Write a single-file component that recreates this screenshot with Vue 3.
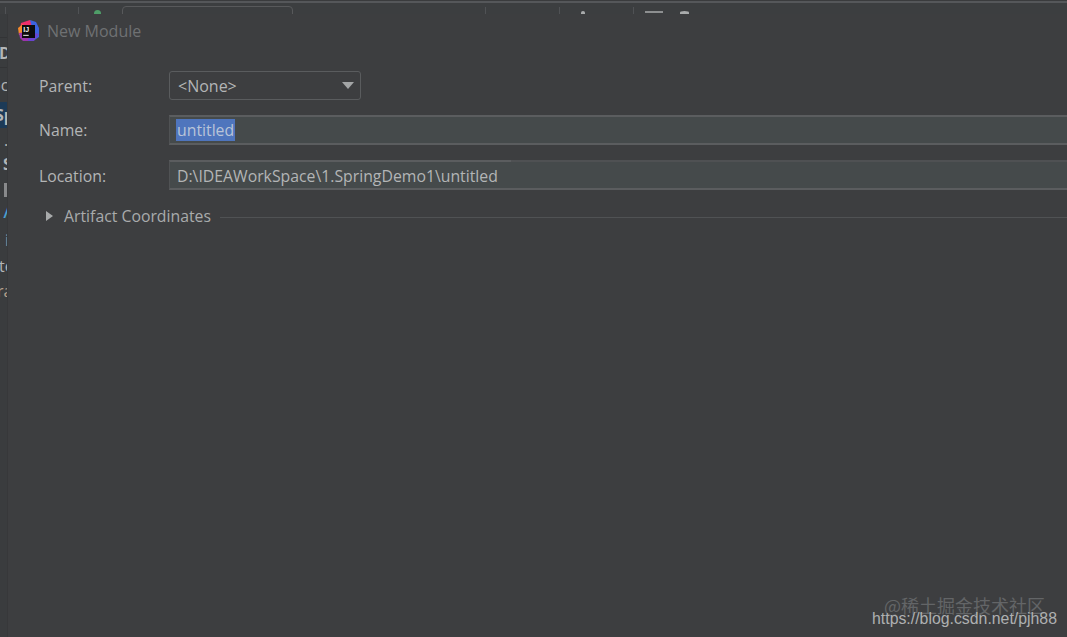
<script setup>
const sideRows = [
  { text: 'D', cls: 'bold first', h: 31, off: -1 },
  { text: 'oc', cls: '', h: 34, off: -9 },
  { text: 'Sp', cls: 'bold sel', h: 26, off: -5 },
  { text: '.', cls: 'dot', h: 24, off: 4 },
  { text: 'S', cls: 'bold', h: 24, off: 3 },
  { text: '', cls: 'block', h: 24, off: 4 },
  { text: '/', cls: 'blue', h: 26, off: 4 },
  { text: 'i', cls: 'thin', h: 28, off: 5 },
  { text: 'te', cls: '', h: 24, off: -1 },
  { text: 'ra', cls: 'orange', h: 26, off: -3 }
]
</script>

<template>
  <div class="screen">
    <div class="ide-top">
      <span class="tick t0"></span>
      <span class="tick t00"></span>
      <span class="green-dot"></span>
      <span class="run-box"></span>
      <span class="tick t1"></span>
      <span class="tick t2"></span>
      <span class="tick t3"></span>
      <span class="frag f1"></span>
      <span class="frag f2"></span>
      <span class="frag f3"></span>
    </div>
    <div class="body">
      <aside class="side">
        <div
          v-for="(r, i) in sideRows"
          :key="i"
          class="side-row"
          :class="r.cls"
          :style="{ height: r.h + 'px', paddingLeft: Math.max(r.off, 0) + 'px', textIndent: Math.min(r.off, 0) + 'px' }"
        >{{ r.text }}</div>
      </aside>
      <main class="dialog">
        <header class="title">
          <svg class="logo" width="22" height="22" viewBox="0 0 22 22">
            <path d="M3 3 L12 0 L16 5 L9 13 L2 9 Z" fill="#ee2e6b" />
            <path d="M0 8 L5 4 L8 14 L1 15 Z" fill="#f68a2a" />
            <path d="M12 0 L18 2 L21 8 L21 17 L15 21 L9 19 L14 8 Z" fill="#3c63e0" />
            <path d="M1 13 L9 12 L12 21 L5 21 L2 18 Z" fill="#9b35ad" />
            <path d="M12 12 L21 14 L16 21 L10 21 Z" fill="#6a44cf" />
            <rect x="4" y="5" width="13" height="13" fill="#0c0c0e" />
            <text x="5.2" y="11.8" class="ij">IJ</text>
            <rect x="5.2" y="14.8" width="5.5" height="1.2" fill="#c8c8c8" />
          </svg>
          <span class="title-text">New Module</span>
        </header>
        <div class="form">
          <div class="row parent-row">
            <label>Parent:</label>
            <div class="combo">
              <span>&lt;None&gt;</span>
              <span class="caret"></span>
            </div>
          </div>
          <div class="row name-row">
            <label>Name:</label>
            <div class="field name-field"><span class="selected">untitled</span></div>
          </div>
          <div class="row loc-row">
            <label>Location:</label>
            <div class="field loc-field"><span class="path">D:\IDEAWorkSpace\1.SpringDemo1\untitled</span></div>
          </div>
          <div class="artifact">
            <span class="tri"></span>
            <span class="art-text">Artifact Coordinates</span>
            <span class="art-line"></span>
          </div>
        </div>
      </main>
    </div>
    <div class="marks">
      <div class="mark-cn">@稀土掘金技术社区</div>
      <div class="mark-url">https://blog.csdn.net/pjh88</div>
    </div>
  </div>
</template>

<style>
html, body { margin: 0; background: #3c3d3f; }
</style>

<style scoped>
.screen {
  position: relative;
  width: 1067px;
  height: 637px;
  overflow: hidden;
  background: #3d3e40;
  font-family: "Open Sans", "Noto Sans", sans-serif;
  color: #b3b5b6;
  display: flex;
  flex-direction: column;
}
.ide-top {
  position: relative;
  height: 14px;
  flex: none;
  overflow: hidden;
  background: #3c3e40;
  box-sizing: border-box;
  border-top: 1px solid #3a3b3d;
}
.ide-top::before {
  content: "";
  display: block;
  height: 2px;
  background: #55575a;
}
.green-dot {
  position: absolute;
  left: 94px;
  top: 9px;
  width: 7px;
  height: 7px;
  border-radius: 50%;
  background: #4f9e68;
}
.run-box {
  position: absolute;
  left: 122px;
  top: 5px;
  width: 171px;
  height: 30px;
  border: 1px solid #58595b;
  border-radius: 4px;
  box-sizing: border-box;
}
.tick {
  position: absolute;
  top: 6px;
  width: 1px;
  height: 8px;
  background: #505255;
}
.t0 { left: 5px; }
.t00 { left: 78px; }
.t1 { left: 485px; }
.t2 { left: 559px; }
.t3 { left: 633px; }
.frag {
  position: absolute;
  background: #a9abac;
}
.f1 { left: 581px; top: 10px; width: 4px; height: 3px; border-radius: 50% 50% 0 0; }
.f2 { left: 645px; top: 10px; width: 18px; height: 2px; background: #8d8f90; }
.f3 { left: 680px; top: 10px; width: 9px; height: 3px; border-radius: 50% 50% 0 0; }

.body {
  flex: 1;
  display: flex;
  min-height: 0;
}
.side {
  width: 8px;
  flex: none;
  overflow: hidden;
  padding-top: 23px;
  box-sizing: border-box;
  background: #3a3c3e;
}
.side-row {
  box-sizing: border-box;
  width: 40px;
  line-height: 1;
  display: flex;
  align-items: center;
  white-space: nowrap;
  font-size: 16px;
  color: #b3b5b6;
}
.side-row.first { border-top: 1px solid #333436; border-bottom: 1px solid #333436; }
.side-row.bold { font-weight: 700; }
.side-row.sel { background: #1c3a57; }
.side-row.blue {
  color: #4a9fd0;
  font-family: "Liberation Sans", sans-serif;
  font-weight: 700;
  font-style: italic;
}
.side-row.orange { color: #b5a08c; }
.side-row.thin { font-weight: 700; color: #8d8f90; }
.side-row.block::before {
  content: "";
  width: 6px;
  height: 14px;
  margin-top: 4px;
  background: #88898b;
}

.dialog {
  flex: 1;
  min-width: 0;
  display: flex;
  flex-direction: column;
  background: #3d3e40;
  box-shadow: -1px 0 0 #37383a;
}
.title {
  display: flex;
  align-items: center;
  height: 34px;
  padding-left: 10px;
}
.logo { display: block; flex: none; }
.ij {
  font-family: "Liberation Sans", sans-serif;
  font-weight: 700;
  font-size: 7px;
  fill: #f2f2f2;
}
.title-text {
  margin-left: 7px;
  font-size: 16px;
  color: #6f7173;
}
.form {
  padding-left: 31px;
  padding-top: 23px;
  display: flex;
  flex-direction: column;
}
.row {
  display: flex;
  align-items: center;
}
.row label {
  width: 130px;
  flex: none;
  font-size: 15.8px;
  color: #b3b5b6;
}
.parent-row label,
.loc-row label { padding-top: 1px; }
.combo {
  width: 192px;
  height: 29px;
  box-sizing: border-box;
  border: 1.5px solid #5a5c5e;
  border-radius: 3px;
  display: flex;
  align-items: center;
  justify-content: space-between;
  padding: 0 6px 0 8px;
  font-size: 16px;
  color: #b3b5b6;
}
.caret {
  width: 0;
  height: 0;
  border-left: 6px solid transparent;
  border-right: 6px solid transparent;
  border-top: 7px solid #a3a5a6;
}
.field {
  position: relative;
  flex: 1;
  height: 30px;
  box-sizing: border-box;
  background: #454a4b;
  border-top: 2px solid #5b5d5f;
  border-bottom: 2px solid #5b5d5f;
  border-left: 1px solid #505254;
  display: flex;
  align-items: center;
  padding-left: 7px;
  font-size: 15.8px;
  color: #b3b5b6;
}
.name-field { padding-left: 6px; }
.loc-field { padding-top: 1px; }
.loc-field::after {
  content: "";
  position: absolute;
  left: 341px;
  right: 0;
  top: -2px;
  height: 2px;
  background: #4f5153;
}
.name-row { margin-top: 15px; }
.loc-row { margin-top: 15px; }
.selected {
  background: #4f75bd;
  color: #b9c4d8;
  height: 22px;
  line-height: 23px;
  width: 58px;
  padding-left: 1px;
  white-space: nowrap;
}
.path { white-space: nowrap; }
.artifact {
  display: flex;
  align-items: center;
  margin-top: 15px;
  margin-left: 7px;
  height: 22px;
}
.tri {
  width: 0;
  height: 0;
  border-top: 5.5px solid transparent;
  border-bottom: 5.5px solid transparent;
  border-left: 7px solid #a8aaab;
  flex: none;
}
.art-text {
  margin-left: 11px;
  font-size: 15.8px;
  color: #a9abac;
  white-space: nowrap;
}
.art-line {
  flex: 1;
  height: 1px;
  margin-left: 9px;
  margin-top: 2px;
  background: #505254;
}
.marks {
  position: absolute;
  right: 10px;
  top: 594px;
  text-align: right;
}
.mark-cn {
  font-family: "Noto Sans CJK SC", sans-serif;
  font-size: 18px;
  line-height: 22px;
  color: #636567;
  margin-right: 12px;
}
.mark-url {
  font-family: "Liberation Sans", sans-serif;
  font-size: 15.85px;
  line-height: 18px;
  margin-top: -6px;
  color: #aeb0b1;
}
</style>
